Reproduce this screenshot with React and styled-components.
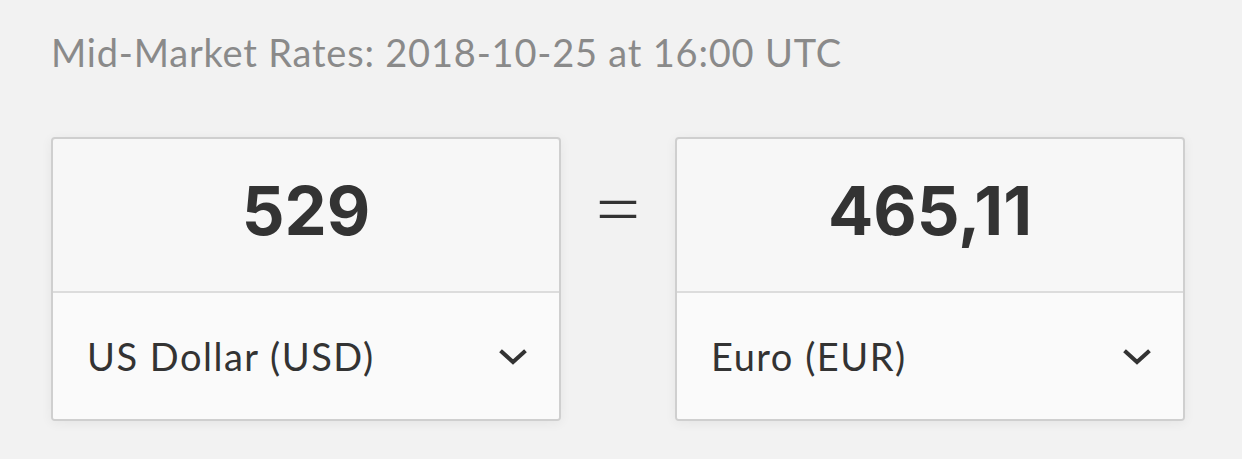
import React from "react";
import styled, { createGlobalStyle } from "styled-components";

const GlobalStyle = createGlobalStyle`
  html, body {
    margin: 0;
    padding: 0;
    background: #f2f2f2;
  }
  body {
    font-family: Lato, "Open Sans", sans-serif;
  }
`;

const Chevron = () => (
  <svg width="28" height="18" viewBox="0 0 28 18">
    <path
      d="M3 5 L14 15 L25 5"
      fill="none"
      stroke="#333"
      strokeWidth="4"
      strokeLinecap="square"
    />
  </svg>
);

const App = () => {
  return (
    <Page>
      <GlobalStyle />
      <Heading>Mid-Market Rates: 2018-10-25 at 16:00 UTC</Heading>
      <Row>
        <Card>
          <Amount>529</Amount>
          <Currency>
            <span>US Dollar (USD)</span>
            <Chevron />
          </Currency>
        </Card>
        <Equals>=</Equals>
        <Card>
          <Amount>465,11</Amount>
          <Currency>
            <span>Euro (EUR)</span>
            <Chevron />
          </Currency>
        </Card>
      </Row>
    </Page>
  );
};

const Page = styled.div`
  width: 1242px;
  height: 459px;
  box-sizing: border-box;
  padding: 26px 0 0 51px;
`;

const Heading = styled.h2`
  margin: 0;
  font-size: 38px;
  font-weight: 400;
  letter-spacing: 0.8px;
  color: #8a8a8a;
  line-height: 52px;
`;

const Row = styled.div`
  display: flex;
  align-items: flex-start;
  margin-top: 59px;
`;

const Card = styled.div`
  width: 510px;
  height: 284px;
  box-sizing: border-box;
  border: 2px solid #cfcfcf;
  border-radius: 4px;
  background: #f7f7f7;
  box-shadow: 0 2px 12px rgba(0, 0, 0, 0.06);
  display: flex;
  flex-direction: column;
  overflow: hidden;
`;

const Amount = styled.div`
  height: 154px;
  display: flex;
  align-items: center;
  justify-content: center;
  font-family: Inter, Lato, sans-serif;
  font-size: 67px;
  font-weight: 700;
  color: #333;
  border-bottom: 2px solid #dcdcdc;
  padding-bottom: 10px;
  box-sizing: border-box;
`;

const Currency = styled.div`
  flex: 1;
  background: #fafafa;
  display: flex;
  align-items: center;
  justify-content: space-between;
  padding: 0 32px 0 34px;
  font-size: 38px;
  letter-spacing: 1.5px;
  color: #333;
`;

const Equals = styled.div`
  width: 114px;
  height: 152px;
  display: flex;
  align-items: center;
  justify-content: center;
  padding-bottom: 16px;
  box-sizing: border-box;
  font-size: 88px;
  font-weight: 300;
  color: #333;
`;

export default App;
